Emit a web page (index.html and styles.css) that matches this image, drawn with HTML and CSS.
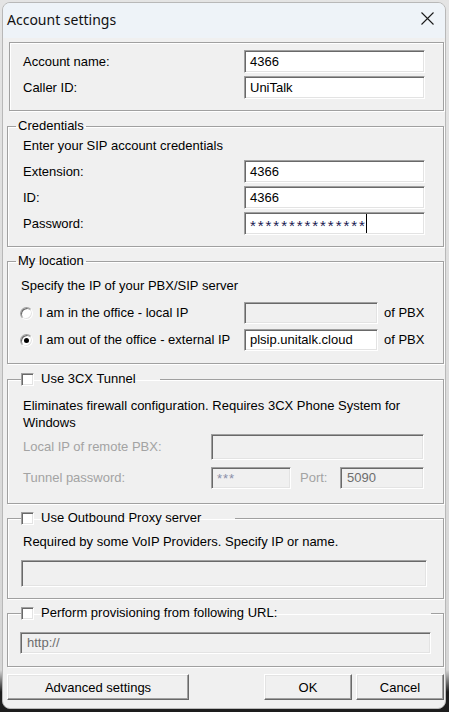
FILE: index.html
```html
<!DOCTYPE html>
<html lang="en">
<head>
<meta charset="utf-8">
<title>Account settings</title>
<link rel="stylesheet" href="styles.css">
</head>
<body>
<div class="window">
  <div class="titlebar">
    <span class="title">Account settings</span>
    <svg class="close" width="13" height="13" viewBox="0 0 13 13"><path d="M0.5 0.5 L12.5 12.5 M12.5 0.5 L0.5 12.5" stroke="#1b1b1b" stroke-width="1.1" fill="none"/></svg>
  </div>
  <div class="content">
    <div class="panel">
      <div class="row"><span class="label">Account name:</span><div class="field wide">4366</div></div>
      <div class="row"><span class="label">Caller ID:</span><div class="field wide">UniTalk</div></div>
    </div>

    <fieldset class="group cred">
      <legend class="text-legend">Credentials</legend>
      <p class="hint">Enter your SIP account credentials</p>
      <div class="row"><span class="label">Extension:</span><div class="field wide">4366</div></div>
      <div class="row"><span class="label">ID:</span><div class="field wide">4366</div></div>
      <div class="row"><span class="label">Password:</span><div class="field wide"><span class="pwd">***************</span><span class="caret"></span></div></div>
    </fieldset>

    <fieldset class="group loc">
      <legend class="text-legend">My location</legend>
      <p class="hint">Specify the IP of your PBX/SIP server</p>
      <div class="row radio-row">
        <span class="radio"></span><span class="label">I am in the office - local IP</span>
        <div class="field ip disabled"></div><span class="ofpbx">of PBX</span>
      </div>
      <div class="row radio-row second">
        <span class="radio checked"></span><span class="label">I am out of the office - external IP</span>
        <div class="field ip">plsip.unitalk.cloud</div><span class="ofpbx">of PBX</span>
      </div>
    </fieldset>

    <fieldset class="group tunnel">
      <legend class="chk-legend tunnel-legend"><span class="checkbox"></span><span>Use 3CX Tunnel</span></legend>
      <p class="hint two">Eliminates firewall configuration. Requires 3CX Phone System for<br>Windows</p>
      <div class="trow first">
        <span class="label dim">Local IP of remote PBX:</span>
        <div class="field disabled remote"></div>
      </div>
      <div class="trow second">
        <span class="label dim">Tunnel password:</span>
        <div class="field disabled tpwd"><span class="stars">***</span></div>
        <span class="label dim port">Port:</span>
        <div class="field disabled portf">5090</div>
      </div>
    </fieldset>

    <fieldset class="group proxy">
      <legend class="chk-legend proxy-legend"><span class="checkbox"></span><span>Use Outbound Proxy server</span></legend>
      <p class="hint">Required by some VoIP Providers. Specify IP or name.</p>
      <div class="field disabled proxyf"></div>
    </fieldset>

    <fieldset class="group prov">
      <legend class="chk-legend prov-legend"><span class="checkbox"></span><span>Perform provisioning from following URL:</span></legend>
      <div class="field disabled provf">http://</div>
    </fieldset>

    <div class="buttons">
      <button class="btn adv">Advanced settings</button>
      <div class="btn-group">
        <button class="btn small">OK</button>
        <button class="btn small">Cancel</button>
      </div>
    </div>
  </div>
</div>
</body>
</html>
```

FILE: styles.css
```css
* { box-sizing: border-box; }
html, body { margin: 0; padding: 0; height: 100%; }
body {
  background: linear-gradient(#e4e4e4 0, #d6d6d6 670px, #1d1d1d 692px, #1d1d1d 100%);
  font-family: "Liberation Sans", Arial, sans-serif;
  font-size: 13px;
  line-height: 16px;
  color: #000;
  overflow: hidden;
}
.window {
  margin: 2px 0 0 2px;
  width: 444px;
  height: 707px;
  border: 1px solid #b8b8b8;
  border-radius: 8px;
  background: #f0f0f0;
  overflow: hidden;
  display: flex;
  flex-direction: column;
}
.titlebar {
  height: 35px;
  flex: none;
  background: #eef3f8;
  display: flex;
  align-items: center;
  justify-content: space-between;
  padding: 0 11px 1px 4px;
}
.title {
  font-family: "Noto Sans", "Open Sans", sans-serif;
  font-size: 14px;
  color: #111;
}
.close { display: block; margin-top: -3px; }

.content { padding: 4px 1px 0 4px; }

.panel {
  margin-left: 2px;
  border: 1px solid #a0a0a0;
  box-shadow: inset 1px 1px 0 #fff, 1px 1px 0 #fff;
  padding: 7px 18px 11px 13px;
}
.row { display: flex; align-items: center; }
.row + .row { margin-top: 3px; }
.label { flex: 1; white-space: nowrap; }
.dim { color: #a3a3a3; }

.field {
  height: 23px;
  background: #fff;
  border: 1px solid;
  border-color: #a0a0a0 #fff #fff #a0a0a0;
  box-shadow: inset 1px 1px 0 #696969, inset -1px -1px 0 #e3e3e3;
  padding: 0 4px 0 5px;
  display: flex;
  align-items: center;
  white-space: nowrap;
  overflow: hidden;
}
.field.disabled { background: #f0f0f0; color: #6d6d6d; }
.wide { width: 181px; }
.pwd { letter-spacing: 1.95px; color: #1a1a50; font-size: 15px; margin-top: 4px; }
.caret { display: inline-block; width: 1px; height: 19px; background: #000; margin-left: -1px; }

.group {
  margin: 6px 0 0 0;
  min-width: 0;
  border: 1px solid #a0a0a0;
  box-shadow: inset 1px 1px 0 #fff, 1px 1px 0 #fff;
  padding: 0 18px 11px 15px;
}
.text-legend { padding: 0 2px; margin-left: -7px; line-height: 16px; }
.chk-legend {
  padding: 0;
  margin-left: -2px;
  height: 16px;
  display: flex;
  align-items: center;
  gap: 7px;
}
.checkbox {
  flex: none;
  width: 13px;
  height: 13px;
  background: #fff;
  border: 1px solid;
  border-color: #a0a0a0 #fff #fff #a0a0a0;
  box-shadow: inset 1px 1px 0 #696969, inset -1px -1px 0 #e3e3e3;
}
.hint { margin: 0; }

.cred { margin-top: 7px; }
.cred .hint { margin-top: 4px; margin-bottom: 6px; }

.loc .hint { margin-top: 9px; margin-bottom: 8px; margin-left: -2px; }
.loc { padding-bottom: 12px; }
.radio-row.second { margin-top: 5px; }
.radio {
  flex: none;
  width: 13px;
  height: 13px;
  margin-left: -3px;
  margin-right: 6px;
  border-radius: 50%;
  background: #fff;
  border: 1px solid;
  border-color: #a0a0a0 #fff #fff #a0a0a0;
  box-shadow: inset 1px 1px 0 #696969, inset -1px -1px 0 #e3e3e3;
  display: flex;
  align-items: center;
  justify-content: center;
}
.radio.checked::after {
  content: "";
  width: 5px;
  height: 5px;
  border-radius: 50%;
  background: #000;
}
.field.ip { width: 134px; height: 22px; }
.ofpbx { width: 41px; margin-left: 6px; white-space: nowrap; }

.tunnel { margin-top: 7px; padding-bottom: 14px; }
.tunnel-legend { width: 139px; }
.hint.two { margin-top: 10px; line-height: 17px; }
.trow { display: flex; align-items: center; }
.trow.first { margin-top: 3px; }
.trow.second { margin-top: 7px; }
.trow .label { flex: none; width: 188px; }
.remote { width: 213px; height: 26px; }
.tpwd { width: 80px; height: 22px; align-items: flex-start; padding-top: 3px; }
.stars { color: #8a8fa8; letter-spacing: 1px; }
.trow .port { width: 40px; margin-left: 9px; }
.portf { width: 84px; height: 22px; padding-left: 6px; }

.proxy { padding: 0 16px 11px 13px; }
.proxy-legend { width: 214px; margin-left: 0; }
.proxy .hint { margin-top: 8px; margin-left: 2px; }
.proxyf { margin-top: 10px; height: 27px; }

.prov { padding: 0 12px 12px 12px; }
.prov-legend { width: 410px; margin-left: 1px; }
.provf { margin-top: 11px; height: 22px; padding-left: 6px; }

.buttons {
  margin-top: 7px;
  display: flex;
  justify-content: space-between;
}
.btn-group { display: flex; gap: 4px; }
.btn {
  font-family: "Liberation Sans", Arial, sans-serif;
  font-size: 13px;
  color: #000;
  height: 26px;
  background: #f0f0f0;
  border: 1px solid;
  border-color: #fff #696969 #696969 #fff;
  box-shadow: inset -1px -1px 0 #a0a0a0, inset 1px 1px 0 #e3e3e3;
  padding: 0;
  margin: 0;
}
.adv { width: 182px; }
.small { width: 88px; }
```
